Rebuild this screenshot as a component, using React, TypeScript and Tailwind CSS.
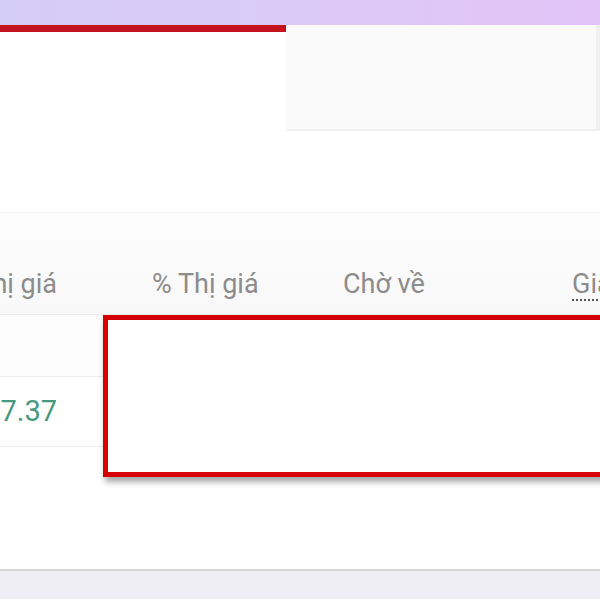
import React from 'react';

export default function App() {
  return (
    <div className="relative w-[600px] h-[600px] overflow-hidden bg-white font-['Roboto',sans-serif]">
      {/* Top gradient band */}
      <div className="h-[25px] bg-gradient-to-r from-[#d4cdf6] via-[#dccaf6] to-[#e2c4f8]" />

      {/* Tab bar + side panel */}
      <div className="flex">
        <div className="w-[286px] shrink-0">
          <div className="h-[7px] bg-[#c4121f]" />
        </div>
        <div className="flex-1 h-[106px] bg-[#fafafa] border-b-2 border-r-4 border-[#f0f0f0]" />
      </div>

      <div className="h-[81px]" />

      {/* Table */}
      <div className="border-t border-[#f3f3f3]">
        <div className="flex items-center h-[102px] pt-[42px] bg-gradient-to-b from-[#fdfdfd] to-[#f8f8f8] text-[27px] text-[#8c8c8c] border-b border-[#ececec]">
          <div className="shrink-0 w-[100px] -ml-[43px] text-right whitespace-nowrap">Thị giá</div>
          <div className="shrink-0 ml-[95px] w-[191px] whitespace-nowrap">% Thị giá</div>
          <div className="shrink-0 w-[229px] whitespace-nowrap">Chờ về</div>
          <div className="shrink-0 whitespace-nowrap underline decoration-dotted decoration-[#555] underline-offset-[6px] decoration-2">Giá</div>
        </div>
        <div className="h-[62px] border-b border-[#ececec] bg-[#fdfdfd]" />
        <div className="flex items-center h-[70px] border-b border-[#ececec] text-[29px] text-[#47997f]">
          <div className="shrink-0 w-[100px] -ml-[43px] text-right">17.37</div>
        </div>
      </div>

      {/* Bottom bar */}
      <div className="absolute left-0 right-0 top-[569px] h-[30px] border-t-2 border-[#d6d6d6] bg-[#efeef4]" />

      {/* Red highlight box */}
      <div className="absolute left-[103px] top-[315px] w-[520px] h-[162px] bg-white border-[5px] border-[#d60000] shadow-[2px_5px_6px_rgba(0,0,0,0.35)]" />
    </div>
  );
}
